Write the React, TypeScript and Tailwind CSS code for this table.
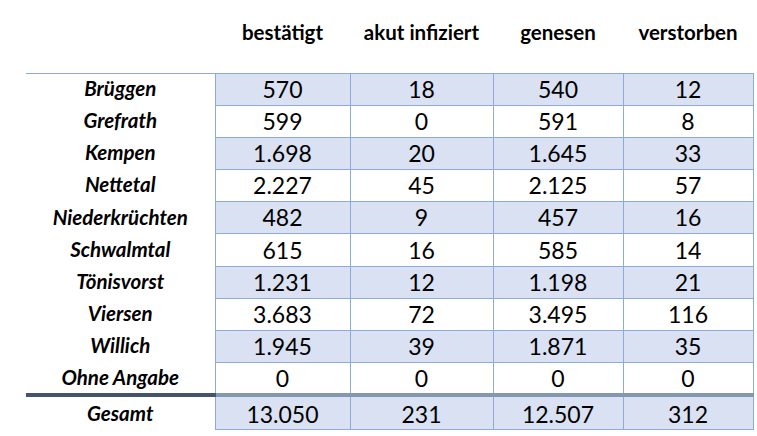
const rows: [string, string, string, string, string][] = [
  ["Brüggen", "570", "18", "540", "12"],
  ["Grefrath", "599", "0", "591", "8"],
  ["Kempen", "1.698", "20", "1.645", "33"],
  ["Nettetal", "2.227", "45", "2.125", "57"],
  ["Niederkrüchten", "482", "9", "457", "16"],
  ["Schwalmtal", "615", "16", "585", "14"],
  ["Tönisvorst", "1.231", "12", "1.198", "21"],
  ["Viersen", "3.683", "72", "3.495", "116"],
  ["Willich", "1.945", "39", "1.871", "35"],
  ["Ohne Angabe", "0", "0", "0", "0"],
];

const headers = ["bestätigt", "akut infiziert", "genesen", "verstorben"];

export default function App() {
  return (
    <div className="w-[757px] h-[436px] bg-white overflow-hidden pl-[26px] font-['Lato','Liberation_Sans',sans-serif] text-black">
      <table className="border-collapse table-fixed w-[727px]">
        <colgroup>
          <col className="w-[189px]" />
          <col className="w-[135px]" />
          <col className="w-[143px]" />
          <col className="w-[130px]" />
          <col className="w-[130px]" />
        </colgroup>
        <thead>
          <tr>
            <th className="h-[73px]" />
            {headers.map((h) => (
              <th key={h} className="h-[73px] pb-[8px] text-[20.5px] font-bold text-center align-middle leading-none">
                {h}
              </th>
            ))}
          </tr>
        </thead>
        <tbody>
          {rows.map((r, i) => {
            const fill = i % 2 === 0 ? "bg-[#d9e1f2]" : "bg-white";
            const first = i === 0;
            return (
              <tr key={r[0]} className="h-[32.2px]">
                <td
                  className={`h-[32.2px] p-0 pb-[2px] text-center text-[20.5px] leading-none font-bold italic ${
                    first ? "border-t border-t-[#8eaadb]" : ""
                  }`}
                >
                  {r[0]}
                </td>
                {r.slice(1).map((v, j) => (
                  <td
                    key={j}
                    className={`h-[32.2px] p-0 text-center text-[23px] leading-none border border-[#8eaadb] ${fill}`}
                  >
                    {v}
                  </td>
                ))}
              </tr>
            );
          })}
          <tr className="h-[35px]">
            <td className="h-[35px] p-0 text-center text-[20.5px] leading-none font-bold italic border-t-4 border-t-[#44546a]">
              Gesamt
            </td>
            {["13.050", "231", "12.507", "312"].map((v) => (
              <td
                key={v}
                className="h-[35px] p-0 pt-[2px] text-center text-[23px] leading-none bg-[#d9e1f2] border border-[#8eaadb] border-t-4 border-t-[#8497b0]"
              >
                {v}
              </td>
            ))}
          </tr>
        </tbody>
      </table>
    </div>
  );
}
